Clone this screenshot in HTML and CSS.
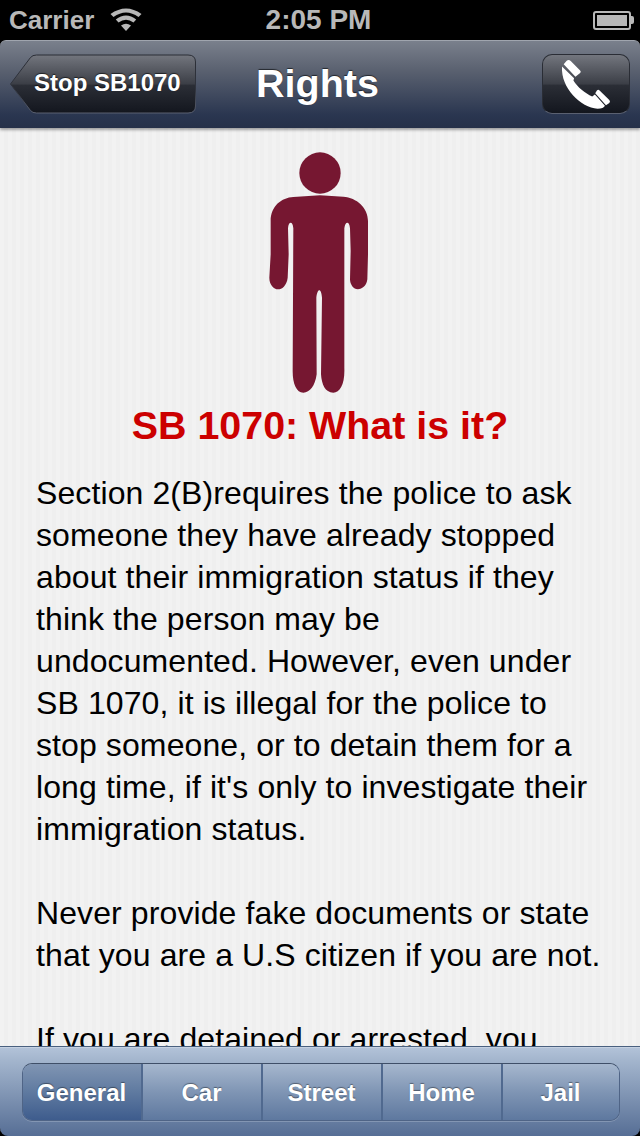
FILE: index.html
```html
<!DOCTYPE html>
<html lang="en">
<head>
    <meta charset="UTF-8">
    <meta name="viewport" content="width=device-width, initial-scale=1.0">
    <title>Rights</title>
    <link rel="stylesheet" href="styles.css">
</head>
<body>
    <div class="status-bar">
        <div class="status-left">
            <span>Carrier</span>
            <svg class="wifi" width="34" height="24" viewBox="0 0 34 24">
                <path d="M17 23 L12 17.5 Q17 14 22 17.5 Z" fill="#b8b8b8"/>
                <path d="M9.5 14.5 L6.8 11.5 Q17 3.500 27.200 11.500 L24.500 14.500 Q17 9 9.500 14.500 Z" fill="#b8b8b8"/>
                <path d="M4.500 9 L1.500 6 Q17 -5 32.500 6 L29.500 9 Q17 0 4.500 9 Z" fill="#b8b8b8"/>
            </svg>
        </div>
        <div class="status-time">2:05 PM</div>
        <div class="status-right">
            <div class="battery"><div class="battery-fill"></div></div>
            <div class="battery-tip"></div>
        </div>
    </div>

    <div class="nav-bar">
        <a class="back-btn">
            <svg class="back-shape" width="188" height="60" viewBox="0 0 188 60">
                <defs>
                    <linearGradient id="backGrad" x1="0" y1="0" x2="0" y2="1">
                        <stop offset="0" stop-color="#73767e"/>
                        <stop offset="0.5" stop-color="#3b3e46"/>
                        <stop offset="0.52" stop-color="#2b2e36"/>
                        <stop offset="1" stop-color="#13161e"/>
                    </linearGradient>
                    <linearGradient id="backEdge" x1="0" y1="0" x2="0" y2="1">
                        <stop offset="0" stop-color="#2a2d35"/>
                        <stop offset="0.6" stop-color="#30343e"/>
                        <stop offset="1" stop-color="#5a6070"/>
                    </linearGradient>
                </defs>
                <path d="M0.500 30 L20.500 3.500 Q22.500 1 26.500 1 L178 1 Q185.500 1 185.500 8 L185.500 52 Q185.500 59 178 59 L26.500 59 Q22.500 59 20.500 56.500 Z" fill="url(#backGrad)" stroke="url(#backEdge)" stroke-width="1"/>
            </svg>
            <span class="back-label">Stop SB1070</span>
        </a>
        <h1 class="nav-title">Rights</h1>
        <a class="call-btn">
            <svg width="52" height="52" viewBox="60 25 155 155">
                <path d="M80 33 Q86 28 92 34 L120 62 Q124 66 120 70 L106 81 L71 44 Z" fill="#fff"/>
                <path d="M66 50 L102 85 L100 92 C112 112 135 130 156 140 L164 134 L194 167 Q190 176 172 176 C122 172 62 115 66 50 Z" fill="#fff"/>
                <path d="M170 122 Q174 118 178 122 L207 150 Q211 155 207 159 L197 166 L165 130 Z" fill="#fff"/>
            </svg>
        </a>
    </div>

    <div class="content">
        <svg class="person" width="160" height="260" viewBox="0 0 480 780">
            <circle cx="240" cy="96" r="62" fill="#761731"/>
            <path d="M240 163 L310 167 C350 170 384 200 384 240 L384 340 L382 415 C380 437 362 445 354 445 C340 445 330 430 330 415 L332 330 L330 262 C328 240 316 240 313 262 L313 680 C315 730 300 755 280 755 C255 755 245 730 243 700 L246 470 C244 440 232 440 229 470 L230 700 C225 735 210 755 190 755 C170 755 158 730 158 690 L160 262 C158 240 146 240 144 262 L146 340 L143 410 C140 435 125 445 115 445 C100 445 88 430 88 410 L92 340 L92 240 C92 195 125 170 160 168 Z" fill="#761731"/>
        </svg>
        <h2 class="headline">SB 1070: What is it?</h2>
        <p>Section 2(B)requires the police to ask someone they have already stopped about their immigration status if they think the person may be undocumented. However, even under SB 1070, it is illegal for the police to stop someone, or to detain them for a long time, if it's only to investigate their immigration status.</p>
        <p>Never provide fake documents or state that you are a U.S citizen if you are not.</p>
        <p>If you are detained or arrested, you</p>
    </div>

    <div class="tab-bar">
        <div class="segments">
            <div class="segment active">General</div>
            <div class="segment">Car</div>
            <div class="segment">Street</div>
            <div class="segment">Home</div>
            <div class="segment">Jail</div>
        </div>
    </div>
</body>
</html>
```

FILE: styles.css
```css
html, body {
    margin: 0;
    background-color: black;
}
body {
    font-family: "Liberation Sans", Arial, sans-serif;
    width: 640px;
    height: 1136px;
    display: flex;
    flex-direction: column;
    overflow: hidden;
}
.status-bar {
    height: 40px;
    flex: none;
    display: grid;
    grid-template-columns: 1fr auto 1fr;
    align-items: center;
    padding: 0 6px 0 9px;
    color: #b8b8b8;
    font-size: 26px;
    font-weight: bold;
}
.status-left {
    display: flex;
    align-items: center;
    gap: 15px;
}
.status-time {
    font-size: 28px;
    margin-right: 6px;
}
.status-right {
    display: flex;
    align-items: center;
    justify-content: flex-end;
}
.battery {
    width: 38px;
    height: 19px;
    box-sizing: border-box;
    border: 2px solid #b8b8b8;
    border-radius: 3px;
    padding: 2px;
}
.battery-fill {
    height: 100%;
    background-color: #b8b8b8;
}
.battery-tip {
    width: 3px;
    height: 8px;
    background-color: #b8b8b8;
    border-radius: 0 2px 2px 0;
}
.nav-bar {
    height: 88px;
    flex: none;
    box-sizing: border-box;
    display: grid;
    grid-template-columns: 1fr auto 1fr;
    align-items: center;
    padding: 0 10px 2px;
    border-radius: 6px 6px 0 0;
    border-top: 1px solid #a0a5ae;
    background: linear-gradient(#7a808c, #59606f 35%, #2a3650 85%, #263149);
    box-shadow: 0 2px 3px rgba(0, 0, 0, 0.35);
    position: relative;
    z-index: 2;
}
.back-btn {
    position: relative;
    width: 186px;
    height: 60px;
    display: flex;
    align-items: center;
    padding-left: 24px;
    box-sizing: border-box;
}
.back-shape {
    position: absolute;
    left: 0;
    top: 0;
}
.back-label {
    position: relative;
    color: white;
    font-size: 24px;
    font-weight: bold;
    padding-bottom: 2px;
    text-shadow: 0 -1px 1px rgba(0, 0, 0, 0.6);
}
.nav-title {
    margin: 0 5px 0 0;
    color: white;
    font-size: 39.500px;
    font-weight: bold;
    text-shadow: 0 -1px 1px rgba(0, 0, 0, 0.6);
}
.call-btn {
    justify-self: end;
    width: 88px;
    height: 60px;
    box-sizing: border-box;
    display: flex;
    align-items: center;
    justify-content: center;
    border: 1px solid #2a2d35;
    border-bottom-color: #5a6070;
    border-radius: 10px;
    background: linear-gradient(#73767e, #3b3e46 50%, #2b2e36 52%, #13161e);
}
.content {
    flex: 1;
    min-height: 0;
    overflow: hidden;
    box-sizing: border-box;
    padding: 13px 36px 0;
    color: black;
    font-size: 32px;
    line-height: 42px;
    letter-spacing: 0.1px;
    background-color: #f0f0f0;
    background-image: repeating-linear-gradient(90deg, #f2f2f2 0, #f2f2f2 4px, #efefef 4px, #efefef 8px);
}
.person {
    display: block;
    margin: 0 auto;
}
.headline {
    margin: -1px 0 22px;
    color: #cc0000;
    font-size: 39.400px;
    line-height: 50px;
    font-weight: bold;
    letter-spacing: 0;
    text-align: center;
}
.content p {
    margin: 0 0 42px;
}
.tab-bar {
    height: 90px;
    flex: none;
    box-sizing: border-box;
    padding: 16px 20px 12px 22px;
    border-top: 1px solid #49607f;
    border-radius: 0 0 8px 8px;
    background: linear-gradient(#b3c3d9, #a3b5cd 15%, #566e95);
    box-shadow: inset 0 1px 0 #c5d1e2;
    position: relative;
}
.segments {
    display: grid;
    grid-template-columns: 118px 120px 120px 120px 118px;
    height: 58px;
    box-sizing: border-box;
    border: 1px solid #4f6486;
    border-top-color: #3f4f68;
    border-radius: 10px;
    overflow: hidden;
    box-shadow: 0 1px 0 rgba(255, 255, 255, 0.2);
}
.segment {
    display: flex;
    align-items: center;
    justify-content: center;
    box-sizing: border-box;
    padding: 2px 1px 0 0;
    color: white;
    font-size: 24px;
    font-weight: bold;
    text-shadow: 0 -1px 1px rgba(0, 0, 0, 0.4);
    border-left: 2px solid #50698f;
    background: linear-gradient(#a6b7ce, #7f95b4 50%, #5e789f);
}
.segment.active {
    border-left: none;
    background: linear-gradient(#8095b3, #5f7aa0 50%, #3e5c8d);
}
```
